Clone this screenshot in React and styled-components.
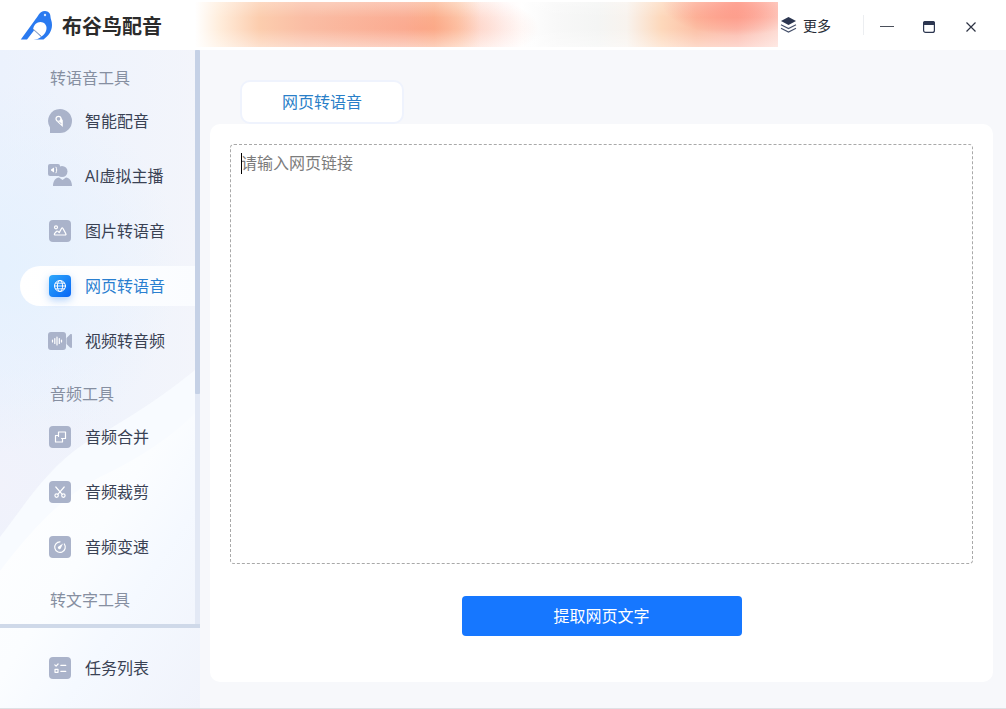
import React, { useState } from 'react';
import styled, { createGlobalStyle, css } from 'styled-components';

const GlobalStyle = createGlobalStyle`
  * {
    box-sizing: border-box;
  }
  body {
    margin: 0;
    font-family: 'Noto Sans CJK SC', sans-serif;
    font-size: 16px;
    color: #2d3547;
  }
  button, textarea {
    font-family: inherit;
    font-size: inherit;
  }
`;

const Window = styled.div`
  min-height: 100vh;
  display: flex;
  flex-direction: column;
  background: #f7f8fb;
  border-bottom: 1px solid #dfe1e5;
`;

const TitleBar = styled.header`
  height: 50px;
  flex: none;
  display: flex;
  align-items: center;
  background: #fff;
`;
const Brand = styled.div`
  width: 195px;
  flex: none;
  display: flex;
  align-items: center;
  gap: 8px;
  padding: 2px 0 0 20px;
`;
const BrandName = styled.h1`
  margin: 0;
  font-size: 20px;
  line-height: 30px;
  font-weight: 700;
  color: #2b2b2b;
`;
const Banner = styled.div`
  flex: 1;
  height: 45px;
  margin-bottom: 1px;
  background:
    linear-gradient(to bottom, rgba(255, 255, 255, 0.25), transparent 35%, transparent 60%, rgba(255, 255, 255, 0.4)),
    radial-gradient(ellipse 13% 75% at 93% 0, rgba(255, 120, 98, 0.8), transparent),
    radial-gradient(ellipse 20% 90% at 39% 60%, rgba(252, 148, 118, 0.5), transparent),
    linear-gradient(
      to right,
      #fff 0,
      #ffeedd 4%,
      #fccdae 11%,
      #fabda4 19%,
      #fabba4 36%,
      #fbbb97 41%,
      #fdd5b8 45%,
      #fff1ec 49%,
      #fffafa 53%,
      #fff 56%,
      #f8f8f8 62%,
      #f4f5f4 69%,
      #f8f3ee 74%,
      #fdd8bb 80%,
      #fcc0a6 86%,
      #fcbcae 93%,
      #fddad2 100%
    );
`;
const MoreButton = styled.button`
  display: flex;
  align-items: center;
  gap: 6px;
  border: 0;
  padding: 0 0 0 2px;
  width: 86px;
  height: 20px;
  border-right: 1px solid #eceef1;
  background: none;
  font-size: 14px;
  line-height: 20px;
  color: #262b36;
  cursor: pointer;
`;
const WindowButtons = styled.div`
  display: flex;
  gap: 12px;
  padding: 4px 20px 0 8px;
`;
const WindowButton = styled.button`
  width: 30px;
  height: 30px;
  display: flex;
  align-items: center;
  justify-content: center;
  border: 0;
  padding: 0;
  background: none;
  cursor: pointer;
`;

const Body = styled.div`
  flex: 1;
  display: flex;
`;

const Sidebar = styled.aside`
  position: relative;
  z-index: 0;
  width: 200px;
  flex: none;
  display: flex;
  flex-direction: column;
  background:
    radial-gradient(ellipse 90% 28% at 0 33%, #e5f1fe, transparent),
    radial-gradient(ellipse 70% 24% at 0 66%, #f1f2fb, transparent),
    linear-gradient(to right, #ecf2fd, #f3f5fb);
`;
const Backdrop = styled.svg`
  position: absolute;
  inset: 0;
  width: 100%;
  height: 100%;
  z-index: -1;
`;
const ScrollArea = styled.div`
  flex: 1;
  display: flex;
`;
const Groups = styled.nav`
  flex: 1;
  padding: 14px 0 12px 20px;
  display: flex;
  flex-direction: column;
  gap: 18px;
`;
const ScrollTrack = styled.div`
  width: 5px;
  background: #e3e9f5;
`;
const ScrollThumb = styled.div`
  height: 60%;
  background: #c5d1e6;
  border-radius: 1px;
`;
const Group = styled.section`
  display: flex;
  flex-direction: column;
  gap: 11px;
`;
const GroupTitle = styled.h2`
  margin: 0;
  padding-left: 30px;
  font-size: 16px;
  line-height: 26px;
  font-weight: 400;
  color: #868fa1;
`;
const Items = styled.div`
  display: flex;
  flex-direction: column;
  gap: 15px;
  padding-bottom: 1px;
`;
const Item = styled.button`
  height: 40px;
  display: flex;
  align-items: center;
  gap: 13px;
  border: 0;
  padding: 0 0 0 28px;
  border-radius: 20px 0 0 20px;
  background: none;
  line-height: 24px;
  color: #3a4254;
  white-space: nowrap;
  cursor: pointer;
  ${({ $active }) =>
    $active &&
    css`
      background: linear-gradient(to right, #fff, #fafcff);
      color: #2a7fd0;
    `}
`;
const Label = styled.span`
  font-family: 'Open Sans', 'Noto Sans CJK SC', sans-serif;
`;
const IconBox = styled.svg`
  width: 24px;
  height: 24px;
  flex: none;
  overflow: visible;
  ${({ $active }) =>
    $active &&
    css`
      filter: drop-shadow(0 3px 4px rgba(28, 120, 240, 0.35));
    `}
`;
const TaskBar = styled.div`
  flex: none;
  height: 84px;
  border-top: 4px solid #cfd9e9;
  padding: 20px 0 0 20px;
`;

const Main = styled.main`
  flex: 1;
  display: flex;
  flex-direction: column;
  padding: 30px 13px 26px 10px;
`;
const Tabs = styled.div`
  display: flex;
  padding-left: 30px;
`;
const Tab = styled.button`
  width: 164px;
  height: 44px;
  padding: 0 0 2px;
  border: 2px solid #eff3fd;
  border-radius: 10px;
  background: #fff;
  color: #2a7fc8;
  line-height: 24px;
  cursor: pointer;
`;
const Panel = styled.section`
  flex: 1;
  display: flex;
  flex-direction: column;
  align-items: center;
  padding: 20px 20px 46px;
  border-radius: 10px;
  background: #fff;
`;
const LinkField = styled.label`
  position: relative;
  flex: 1;
  width: 100%;
  display: flex;
`;
const LinkInput = styled.textarea`
  flex: 1;
  min-height: 200px;
  padding: 5px 10px;
  border: 1px dashed #a9a9a9;
  border-radius: 4px;
  outline: 0;
  resize: none;
  background: #fff;
  line-height: 24px;
  color: #2d3547;
  &::placeholder {
    color: #7c7c7c;
    opacity: 1;
  }
`;
const Caret = styled.span`
  position: absolute;
  left: 11px;
  top: 9px;
  width: 1px;
  height: 21px;
  background: #000;
`;
const SubmitButton = styled.button`
  width: 280px;
  height: 40px;
  margin-top: 32px;
  padding: 0 0 2px;
  border: 0;
  border-radius: 4px;
  background: #1677ff;
  color: #fff;
  line-height: 24px;
  cursor: pointer;
`;

const Tile = ({ fill = '#aab3ca' }) => <rect x="1" y="1" width="22" height="22" rx="4" fill={fill} />;

const line = {
  fill: 'none',
  stroke: '#fff',
  strokeWidth: 1.2,
  strokeLinecap: 'round',
  strokeLinejoin: 'round',
};

const icons = {
  voice: (
    <>
      <path d="M12 0a12 12 0 1 1 0 24H2v-5.500A12 12 0 0 1 12 0Z" fill="#aab3ca" />
      <circle cx="10.500" cy="9.800" r="2.500" {...line} />
      <path d="M8.500 12.200 14.800 18v-6.800l-2-2.800-.2 3-2.400 1.300Z" fill="#fff" />
      <path d="m11 12.500 2.300 2.500" stroke="#aab3ca" strokeWidth=".8" />
    </>
  ),
  anchor: (
    <>
      <circle cx="14" cy="7.500" r="5.500" fill="#aab3ca" />
      <path d="M5 22c0-5 2.500-8 6-8.500l3.500 2.500 3.500-2.500c3.500.5 6 3.500 6 8.500Z" fill="#aab3ca" />
      <path d="M2 0h8a2 2 0 0 1 2 2v8a2 2 0 0 1-2 2H2a2 2 0 0 1-2-2V2a2 2 0 0 1 2-2Z" fill="#aab3ca" />
      <path d="M3 5.400 6 3.500v5L3 6.600Z" fill="#fff" />
      <path d="M8 3.200c1 1.800 1 3.800 0 5.600" {...line} strokeWidth="1" />
    </>
  ),
  image: (
    <>
      <Tile />
      <circle cx="8" cy="8.300" r="1.500" {...line} />
      <path d="M7.500 16H17c1 0 1.300-.6.800-1.400L15 9.500c-.5-.8-1-.8-1.500 0l-2.300 4.100-1.400-1.300c-.5-.5-1-.4-1.400.2l-1.900 2.200c-.4.7-.1 1.300 1 1.300Z" {...line} />
    </>
  ),
  web: (
    <>
      <defs>
        <linearGradient id="webTile" x1="0" y1="0" x2="1" y2="1">
          <stop offset="0" stopColor="#2da8fb" />
          <stop offset="1" stopColor="#0865f5" />
        </linearGradient>
      </defs>
      <Tile fill="url(#webTile)" />
      <circle cx="12" cy="12" r="5.500" {...line} strokeWidth="1" />
      <ellipse cx="12" cy="12" rx="2.600" ry="5.500" {...line} strokeWidth="1" />
      <path d="M6.500 12h11M7.500 9.200h9M7.500 14.800h9" {...line} strokeWidth=".9" />
    </>
  ),
  video: (
    <>
      <rect x="0" y="3" width="18" height="18" rx="3" fill="#aab3ca" />
      <path d="M18.500 9 22 5.500c1-.8 2-.5 2 .8v11.400c0 1.300-1 1.600-2 .8L18.500 15Z" fill="#aab3ca" />
      <path d="M4.500 11v2M6.800 9.500v5M9 8v8M11.300 9.500v5M13.500 11v2" {...line} />
    </>
  ),
  merge: (
    <>
      <Tile />
      <path d="M10.500 7h7v6.500h-3V17h-7v-6.500h3ZM10.500 10.500v1M14.500 13.500h-1" {...line} />
    </>
  ),
  cut: (
    <>
      <Tile />
      <path d="m7.800 7 6.400 7.300M16.200 7l-6.400 7.300" {...line} />
      <circle cx="8.600" cy="15.600" r="1.700" {...line} />
      <circle cx="15.400" cy="15.600" r="1.700" {...line} />
    </>
  ),
  speed: (
    <>
      <Tile />
      <path d="M12 6.800A5.300 5.300 0 1 0 16.300 9" {...line} />
      <path d="m15 8.600-2.200 4.700a1.500 1.500 0 1 1-2-2Z" fill="#fff" />
    </>
  ),
  tasks: (
    <>
      <Tile />
      <path d="m6.800 8.800 1.300 1.300 2-2.100M12.800 9.300h5M12.800 15.300h5" {...line} />
      <rect x="7" y="13.300" width="3" height="3" {...line} />
    </>
  ),
};

const groups = [
  {
    title: '转语音工具',
    items: [
      { icon: 'voice', label: '智能配音' },
      { icon: 'anchor', label: 'AI虚拟主播' },
      { icon: 'image', label: '图片转语音' },
      { icon: 'web', label: '网页转语音' },
      { icon: 'video', label: '视频转音频' },
    ],
  },
  {
    title: '音频工具',
    items: [
      { icon: 'merge', label: '音频合并' },
      { icon: 'cut', label: '音频裁剪' },
      { icon: 'speed', label: '音频变速' },
    ],
  },
  { title: '转文字工具', items: [] },
];

const NavItem = ({ icon, label, active, onClick }) => (
  <Item type="button" $active={active} onClick={onClick}>
    <IconBox viewBox="0 0 24 24" $active={active} aria-hidden="true">
      {icons[icon]}
    </IconBox>
    <Label>{label}</Label>
  </Item>
);

const Logo = () => (
  <svg width="34" height="32" viewBox="0 0 34 32" aria-hidden="true">
    <path
      d="M.8 29.500 17.500 6.500C19.500 2.500 22 1 25 1c3.500.2 5.500 2.500 5.500 6 0 2 1.500 4 1.500 8 0 6-3.500 11-8.500 14.500h-10c2.800 0 5.500-.8 7.500-2.500L14 20.500 7 29.500Z"
      fill="#2a7af0"
    />
    <path d="M13 19.500c.5-4.500 3.700-7.500 7.500-7.500 3.500 0 6 2.800 6 6 0 3.800-2.500 7-5.500 8.800Z" fill="#fff" />
    <path d="m13 19 8.500 7.500" stroke="#7f93b5" strokeWidth="1" />
    <circle cx="25" cy="5" r="1.200" fill="#d9e8ff" />
  </svg>
);

const App = () => {
  const [current, setCurrent] = useState('网页转语音');
  const [link, setLink] = useState('');

  return (
    <Window>
      <GlobalStyle />
      <TitleBar>
        <Brand>
          <Logo />
          <BrandName>布谷鸟配音</BrandName>
        </Brand>
        <Banner />
        <MoreButton type="button">
          <svg width="17" height="16" viewBox="0 0 17 16" aria-hidden="true">
            <path d="m8.500 0 7.500 4-7.500 4L1 4Z" fill="#2c3650" />
            <path d="m1 7.700 7.500 3.900L16 7.700M1 11.200l7.500 3.900 7.500-3.900" fill="none" stroke="#46516b" strokeWidth="1.200" />
          </svg>
          更多
        </MoreButton>
        <WindowButtons>
          <WindowButton type="button" aria-label="最小化">
            <svg width="14" height="14" viewBox="0 0 14 14">
              <path d="M0 6.500h14" stroke="#4a4f5a" />
            </svg>
          </WindowButton>
          <WindowButton type="button" aria-label="最大化">
            <svg width="12" height="12" viewBox="0 0 12 12">
              <rect x=".6" y=".6" width="10.800" height="10.800" rx="2" fill="none" stroke="#2c3650" strokeWidth="1.200" />
              <path d="M0 4V2a2 2 0 0 1 2-2h8a2 2 0 0 1 2 2v2Z" fill="#2c3650" />
            </svg>
          </WindowButton>
          <WindowButton type="button" aria-label="关闭">
            <svg width="10" height="10" viewBox="0 0 10 10">
              <path d="m.5.5 9 9M9.500.5l-9 9" stroke="#2c3242" strokeWidth="1.200" />
            </svg>
          </WindowButton>
        </WindowButtons>
      </TitleBar>
      <Body>
        <Sidebar>
          <Backdrop viewBox="0 0 200 658" preserveAspectRatio="none" aria-hidden="true">
            <defs>
              <linearGradient id="wave" x1="0" y1="0" x2="1" y2="1">
                <stop offset="0" stopColor="#fff" />
                <stop offset=".45" stopColor="#fbfdff" />
                <stop offset=".65" stopColor="#f5f9ff" />
                <stop offset="1" stopColor="#f0f3fb" />
              </linearGradient>
            </defs>
            <path d="M0 487C25 455 45 420 85 393 130 368 165 345 200 316V658H0Z" fill="#f8fbff" />
            <path d="M0 521C35 475 65 445 100 427 140 408 175 385 200 358V658H0Z" fill="url(#wave)" />
          </Backdrop>
          <ScrollArea>
            <Groups>
              {groups.map((group) => (
                <Group key={group.title}>
                  <GroupTitle>{group.title}</GroupTitle>
                  {group.items.length > 0 && (
                    <Items>
                      {group.items.map((item) => (
                        <NavItem
                          key={item.label}
                          {...item}
                          active={item.label === current}
                          onClick={() => setCurrent(item.label)}
                        />
                      ))}
                    </Items>
                  )}
                </Group>
              ))}
            </Groups>
            <ScrollTrack>
              <ScrollThumb />
            </ScrollTrack>
          </ScrollArea>
          <TaskBar>
            <NavItem icon="tasks" label="任务列表" />
          </TaskBar>
        </Sidebar>
        <Main>
          <Tabs>
            <Tab type="button">网页转语音</Tab>
          </Tabs>
          <Panel>
            <LinkField>
              <LinkInput
                aria-label="网页链接"
                placeholder="请输入网页链接"
                value={link}
                onChange={(e) => setLink(e.target.value)}
              />
              {link === '' && <Caret />}
            </LinkField>
            <SubmitButton type="button">提取网页文字</SubmitButton>
          </Panel>
        </Main>
      </Body>
    </Window>
  );
};

export default App;
